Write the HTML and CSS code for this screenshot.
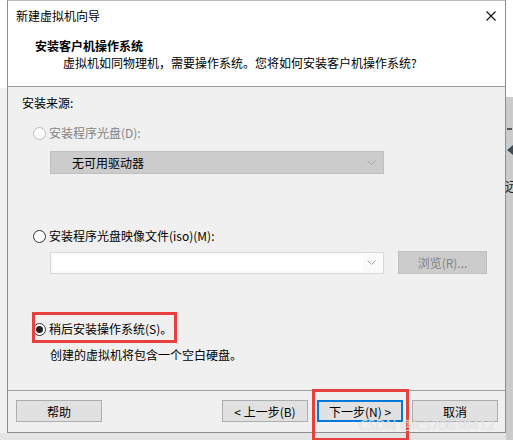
FILE: index.html
```html
<!DOCTYPE html>
<html lang="zh-CN">
<head>
  <meta charset="UTF-8">
  <title>新建虚拟机向导</title>
  <link rel="stylesheet" href="styles.css">
</head>
<body>
  <div class="screen">
    <div class="side-left"></div>

    <div class="dialog">
      <div class="titlebar">
        <span class="title">新建虚拟机向导</span>
        <svg class="close" width="10" height="10" viewBox="0 0 10 10">
          <path d="M0.5 0.5 L9.5 9.5 M9.5 0.5 L0.5 9.5" stroke="#111" stroke-width="1.1" fill="none"/>
        </svg>
      </div>

      <div class="header">
        <h1>安装客户机操作系统</h1>
        <p>虚拟机如同物理机，需要操作系统。您将如何安装客户机操作系统?</p>
      </div>

      <div class="content">
        <div class="group-label">安装来源:</div>

        <label class="option disabled option-first">
          <span class="radio"></span>安装程序光盘(D):
        </label>
        <div class="select disabled-select">
          <span class="select-text">无可用驱动器</span>
          <svg class="chevron" width="9" height="5" viewBox="0 0 9 5"><path d="M0.5 0.5 L4.5 4.5 L8.5 0.5" stroke="#a9a9a9" fill="none"/></svg>
        </div>

        <label class="option option-iso">
          <span class="radio"></span>安装程序光盘映像文件(iso)(M):
        </label>
        <div class="iso-row">
          <div class="select combo">
            <span class="combo-field"></span>
            <svg class="chevron" width="9" height="5" viewBox="0 0 9 5"><path d="M0.5 0.5 L4.5 4.5 L8.5 0.5" stroke="#a9a9a9" fill="none"/></svg>
          </div>
          <div class="browse">浏览(R)...</div>
        </div>

        <label class="option option-later">
          <span class="radio checked"></span>稍后安装操作系统(S)。
        </label>
        <div class="note">创建的虚拟机将包含一个空白硬盘。</div>

        <span class="mark mark-later"></span>
      </div>

      <div class="footer">
        <button class="btn">帮助</button>
        <div class="spacer"></div>
        <button class="btn">&lt; 上一步(B)</button>
        <button class="btn btn-default">下一步(N) &gt;</button>
        <button class="btn">取消</button>
        <span class="mark mark-next"></span>
        <span class="watermark">CSDN @lc570638412</span>
      </div>
    </div>

    <div class="side-right">
      <span class="dash"></span>
      <span class="arrow"></span>
      <span class="glyph">远</span>
    </div>
  </div>
</body>
</html>
```

FILE: styles.css
```css
* {
  box-sizing: border-box;
}

body {
  margin: 0;
  font-family: "Noto Sans CJK SC", "Microsoft YaHei", sans-serif;
  font-size: 12px;
  color: #000;
  background: #e8e8e8;
}

.screen {
  width: 513px;
  height: 440px;
  display: flex;
  overflow: hidden;
  background: #e4e4e4;
}

.side-left {
  width: 7px;
  height: 433px;
  background: linear-gradient(#ffffff 0 88px, #f0f0f0 88px);
}

.dialog {
  width: 499px;
  height: 433px;
  border: 1px solid #8c8c8c;
  border-top-color: #b8b8b8;
  display: flex;
  flex-direction: column;
  background: #f0f0f0;
}

.side-right {
  position: relative;
  flex: 1;
  height: 440px;
  background: linear-gradient(#ffffff 0 97px, #cbcbcb 97px);
}

.side-right .dash {
  position: absolute;
  left: 1px;
  top: 128px;
  width: 5px;
  height: 2px;
  background: #4a5560;
}

.side-right .arrow {
  position: absolute;
  left: 1px;
  top: 145px;
  border-top: 5px solid transparent;
  border-bottom: 5px solid transparent;
  border-right: 6px solid #3f4b55;
}

.side-right .glyph {
  position: absolute;
  left: -1px;
  top: 176px;
  font-size: 13px;
  color: #222;
}

/* title + header (white area) */
.titlebar {
  height: 29px;
  display: flex;
  align-items: center;
  justify-content: space-between;
  padding: 0 10px 0 8px;
  background: #fff;
}

.title {
  line-height: 16px;
}

.close {
  margin-right: -1px;
}

.header {
  height: 57px;
  background: #fff;
  border-bottom: 1px solid #a0a0a0;
  padding: 8px 0 0 27px;
}

.header h1 {
  margin: 0;
  font-size: 12px;
  font-weight: bold;
  line-height: 16px;
}

.header p {
  margin: 1px 0 0 28px;
  line-height: 16px;
}

/* main area */
.content {
  position: relative;
  height: 304px;
  padding: 8px 0 0 14px;
  border-bottom: 1px solid #a0a0a0;
}

.group-label {
  line-height: 16px;
}

.option {
  display: flex;
  align-items: center;
  line-height: 16px;
  margin-left: 11px;
}

.option-first {
  margin-top: 14px;
}

.option-iso {
  margin-top: 54px;
}

.option-later {
  margin-top: 47px;
}

.disabled {
  color: #838383;
}

.radio {
  width: 13px;
  height: 13px;
  border: 1px solid #333;
  border-radius: 50%;
  background: #fff;
  margin-right: 3px;
  display: flex;
  align-items: center;
  justify-content: center;
}

.disabled .radio {
  border-color: #bcbcbc;
  background: #fcfcfc;
}

.radio.checked::after {
  content: "";
  width: 7px;
  height: 7px;
  border-radius: 50%;
  background: #222;
}

.select {
  display: flex;
  align-items: center;
  justify-content: space-between;
  width: 334px;
  height: 23px;
  margin: 10px 0 0 28px;
  padding: 0 7px 0 21px;
}

.disabled-select {
  background: #cccccc;
  border: 1px solid #bfbfbf;
}

.select-text {
  line-height: 16px;
}

.iso-row {
  display: flex;
  align-items: center;
  margin-top: 7px;
}

.combo {
  margin: 0 0 0 28px;
  height: 22px;
  background: #fafafa;
  border: 1px solid #d9d9d9;
  padding: 2px 7px 2px 2px;
}

.combo-field {
  width: 310px;
  height: 16px;
  background: #fff;
}

.browse {
  width: 89px;
  height: 23px;
  margin-left: 14px;
  background: #cccccc;
  border: 1px solid #bfbfbf;
  color: #838383;
  display: flex;
  align-items: center;
  justify-content: center;
}

.note {
  margin: 10px 0 0 28px;
  line-height: 16px;
}

/* footer */
.footer {
  position: relative;
  flex: 1;
  display: flex;
  align-items: flex-start;
  gap: 9px;
  padding: 9px 7px 0 8px;
}

.spacer {
  flex: 1;
}

.btn {
  width: 86px;
  height: 22px;
  padding: 0;
  font: inherit;
  color: #000;
  background: #e1e1e1;
  border: 1px solid #adadad;
}

.btn-default {
  border: 2px solid #0078d7;
}

/* annotations drawn over the dialog */
.mark {
  position: absolute;
  border: 3px solid #e8403d;
  pointer-events: none;
}

.mark-later {
  left: 24px;
  top: 225px;
  width: 145px;
  height: 31px;
}

.mark-next {
  left: 304px;
  top: -2px;
  width: 97px;
  height: 52px;
}

.watermark {
  position: absolute;
  left: 351px;
  top: 24px;
  font-family: "Noto Sans", sans-serif;
  font-size: 14px;
  color: rgba(255, 255, 255, 0.75);
  text-shadow: 0 0 1px rgba(0, 0, 0, 0.25);
  white-space: nowrap;
}
```
